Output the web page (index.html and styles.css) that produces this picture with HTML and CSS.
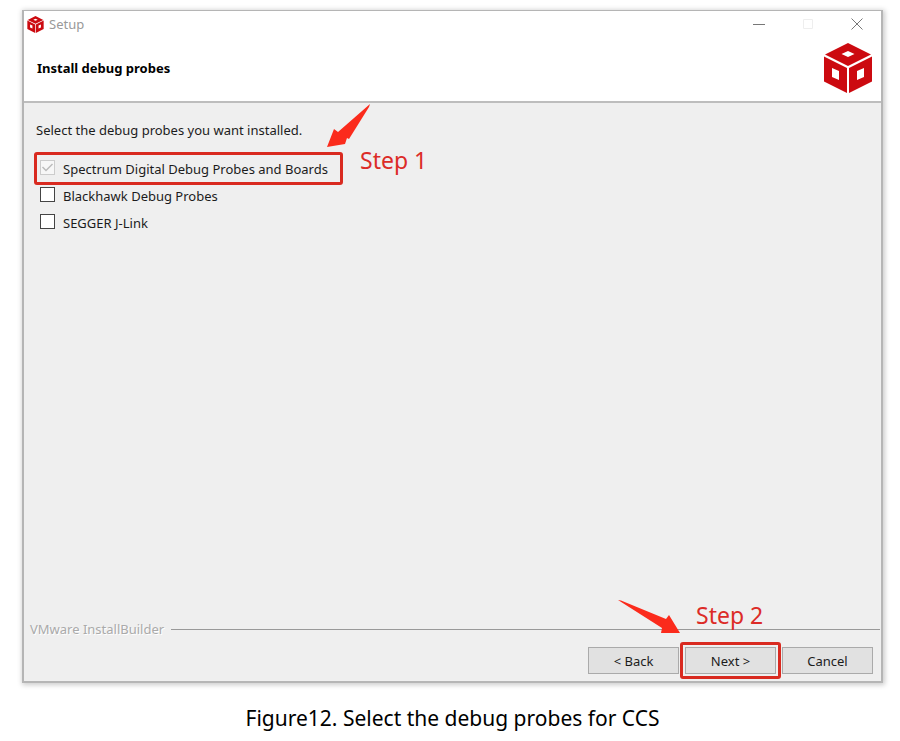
FILE: index.html
```html
<!DOCTYPE html>
<html lang="en">
<head>
<meta charset="utf-8">
<title>Setup</title>
<link rel="stylesheet" href="styles.css">
</head>
<body>
<figure class="figure">
  <section class="window" aria-label="Setup">
    <svg class="defs" aria-hidden="true">
      <symbol id="cube" viewBox="0 0 48 50">
        <path fill="#cc0a10" fill-rule="evenodd" d="M24 0 47 11.500 24 23 1 11.500ZM24 8 17.500 11 24 14 30.500 11Z"/>
        <path fill="#cc0a10" fill-rule="evenodd" d="M0 13.500 23 25V50L0 38.500ZM8 25V34L15 37V28Z"/>
        <path fill="#cc0a10" fill-rule="evenodd" d="M48 13.500 25 25V50L48 38.500ZM40 25V34L33 37V28Z"/>
      </symbol>
    </svg>
    <header class="header">
      <div class="titlebar">
        <svg class="app-icon" aria-hidden="true"><use href="#cube"/></svg>
        <span class="title">Setup</span>
        <button class="control" type="button" aria-label="Minimize"><svg viewBox="0 0 12 12"><path d="M0 6.500H12"/></svg></button>
        <button class="control control-off" type="button" aria-label="Maximize" disabled><svg viewBox="0 0 12 12"><path d="M1.500 1.500H10.500V10.500H1.500Z"/></svg></button>
        <button class="control" type="button" aria-label="Close"><svg viewBox="0 0 12 12"><path d="M.5.500 11.500 11.500M11.500.500.500 11.500"/></svg></button>
      </div>
      <div class="banner">
        <h1>Install debug probes</h1>
        <svg class="logo" aria-hidden="true"><use href="#cube"/></svg>
      </div>
    </header>
    <div class="content">
      <p class="prompt">Select the debug probes you want installed.</p>
      <div class="options">
        <div class="option">
          <label><input type="checkbox" checked disabled>Spectrum Digital Debug Probes and Boards</label>
          <span class="highlight"></span>
          <span class="step step-one">Step 1</span>
          <svg class="arrow-one" viewBox="0 0 44 44" aria-hidden="true"><path d="M43 0 42 3 22 35 20 34 18 40 0 43 7 25 11 28Z"/></svg>
        </div>
        <div class="option"><label><input type="checkbox">Blackhawk Debug Probes</label></div>
        <div class="option"><label><input type="checkbox">SEGGER J-Link</label></div>
      </div>
    </div>
    <footer class="footer">
      <div class="brand">VMware InstallBuilder</div>
      <div class="actions">
        <button class="action" type="button">&lt; Back</button>
        <div class="next">
          <button class="action" type="button">Next &gt;</button>
          <span class="highlight"></span>
          <span class="step step-two">Step 2</span>
          <svg class="arrow-two" viewBox="0 0 62 34" aria-hidden="true"><path d="M0 0 3 .5 48 19 51 15 62 33 43 33 44 28Z"/></svg>
        </div>
        <button class="action" type="button">Cancel</button>
      </div>
    </footer>
  </section>
  <figcaption>Figure12. Select the debug probes for CCS</figcaption>
</figure>
</body>
</html>
```
FILE: styles.css
```css
* { box-sizing: border-box; }
body {
  margin: 0;
  background: #fff;
  color: #1c1c1c;
  font: 13px/18px "Noto Sans", sans-serif;
}
.figure {
  display: flex;
  flex-direction: column;
  min-height: 100vh;
  margin: 0;
  padding: 10px 17px 8px 22px;
}
.window {
  display: flex;
  flex: 1;
  flex-direction: column;
  border: 2px solid #b5b5b5;
  border-top-width: 1px;
  background: #efefef;
  box-shadow: 1px 1px 5px 1px #ccc;
}
.defs { position: absolute; width: 0; height: 0; }
.header {
  border-bottom: 2px solid #bdbdbd;
  background: #fff;
}
.titlebar {
  display: flex;
  align-items: center;
  height: 26px;
  padding-left: 3px;
}
.app-icon { width: 17px; height: 17px; margin-right: 5px; }
.title { flex: 1; color: #999; }
.control {
  display: flex;
  align-items: center;
  justify-content: center;
  width: 49px;
  height: 26px;
  padding: 0;
  border: 0;
  background: none;
}
.control svg { width: 12px; height: 12px; fill: none; stroke: #777; }
.control-off svg { stroke: #eee; }
.banner {
  display: flex;
  align-items: center;
  justify-content: space-between;
  height: 64px;
  padding: 0 9px 2px 13px;
}
h1 { margin: 0; color: #000; font-size: 13px; line-height: 18px; }
.logo { width: 48px; height: 50px; }
.content { flex: 1; padding: 18px 12px; }
.prompt { margin: 0 0 16px; }
.options { padding-left: 4px; }
.option {
  position: relative;
  width: max-content;
  min-width: 297px;
  height: 27px;
}
.option label { display: flex; align-items: center; gap: 8px; height: 28px; }
input {
  appearance: none;
  width: 15px;
  height: 15px;
  margin: 0 0 3px;
  border: 1px solid #444;
  background: #fff;
}
input:disabled {
  border-color: #ccc;
  background: #f7f7f7 url("data:image/svg+xml,%3Csvg xmlns='http://www.w3.org/2000/svg' viewBox='0 0 13 13'%3E%3Cpath d='M1.500 6 5 9.500 11.500 3' fill='none' stroke='%23bbb' stroke-width='1.500'/%3E%3C/svg%3E");
}
.highlight {
  position: absolute;
  inset: -3px -6px;
  border: 3px solid #d92a20;
  border-radius: 3px;
  pointer-events: none;
}
.step {
  position: absolute;
  color: #dc2b27;
  font-size: 23px;
  line-height: 30px;
  white-space: nowrap;
}
.step-one { top: -10px; left: calc(100% + 23px); }
.step-two { bottom: calc(100% + 17px); left: 11px; }
.arrow-one, .arrow-two { position: absolute; fill: #fb2b1c; }
.arrow-one { right: -34px; bottom: 34px; width: 44px; height: 44px; }
.arrow-two { right: calc(100% + 5px); bottom: calc(100% + 13px); width: 62px; height: 34px; }
.footer { padding: 0 1px 7px 6px; }
.brand {
  display: flex;
  align-items: center;
  gap: 7px;
  color: #aaa;
  text-shadow: 1px 1px #fff;
}
.brand::after { flex: 1; height: 1px; background: #999; content: ""; }
.actions {
  display: flex;
  justify-content: flex-end;
  gap: 6px;
  padding: 9px 7px 0 0;
}
.next { position: relative; }
.next .highlight { inset: -5px; }
.action {
  display: block;
  width: 91px;
  height: 27px;
  padding: 0;
  border: 1px solid #aaa;
  background: #e1e1e1;
  color: #1c1c1c;
  font: inherit;
}
figcaption {
  margin-top: 20px;
  color: #000;
  font-size: 21px;
  line-height: 30px;
  text-align: center;
}
```
